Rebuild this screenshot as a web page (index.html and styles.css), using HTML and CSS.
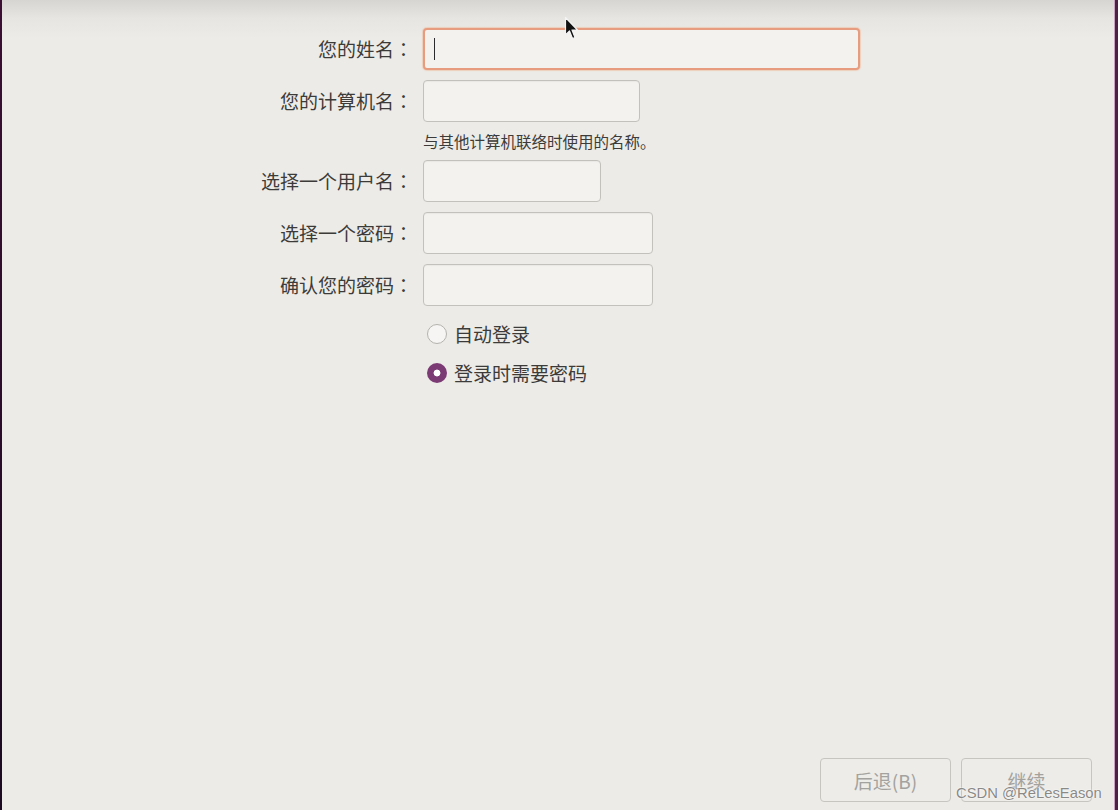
FILE: index.html
```html
<!DOCTYPE html>
<html lang="zh-CN">
<head>
<meta charset="utf-8">
<title>设置用户</title>
<link rel="stylesheet" href="styles.css">
</head>
<body>
<div class="screen">
  <div class="window">
    <div class="form">
      <label class="label">您的姓名<span class="colon" lang="zh-TW">：</span></label>
      <div class="field field-name focused"><span class="caret"></span></div>

      <label class="label">您的计算机名<span class="colon" lang="zh-TW">：</span></label>
      <div class="field field-host"></div>

      <div class="empty"></div>
      <div class="hint">与其他计算机联络时使用的名称。</div>

      <label class="label">选择一个用户名<span class="colon" lang="zh-TW">：</span></label>
      <div class="field field-user"></div>

      <label class="label">选择一个密码<span class="colon" lang="zh-TW">：</span></label>
      <div class="field field-pass"></div>

      <label class="label">确认您的密码<span class="colon" lang="zh-TW">：</span></label>
      <div class="field field-pass"></div>

      <div class="empty"></div>
      <div class="radios">
        <div class="radio-row"><span class="radio"></span><span class="radio-text">自动登录</span></div>
        <div class="radio-row"><span class="radio checked"></span><span class="radio-text">登录时需要密码</span></div>
      </div>
    </div>
    <div class="spacer"></div>
    <div class="actions">
      <button class="btn">后退(B)</button>
      <button class="btn">继续</button>
    </div>
  </div>
  <div class="edge"></div>
  <svg class="pointer" width="16" height="26" viewBox="0 0 16 26">
    <path d="M1.5 1.5 L1.5 19 L5.5 15 L8.5 22.5 L11 21.5 L8 14 L13.5 14 Z" fill="#111" stroke="#f4f4f4" stroke-width="1.2" stroke-linejoin="round"/>
  </svg>
  <div class="watermark">CSDN @ReLesEason</div>
</div>
</body>
</html>
```
FILE: styles.css
```css
html, body {
  margin: 0;
  padding: 0;
  background: #2a0c26;
}

.screen {
  position: relative;
  width: 1118px;
  height: 810px;
  display: flex;
  overflow: hidden;
  background: linear-gradient(#3a0f33, #1c0a22);
  font-family: "Noto Sans CJK SC", "Noto Sans", sans-serif;
}

.window {
  margin-left: 2px;
  width: 1112px;
  height: 810px;
  display: flex;
  flex-direction: column;
  background: linear-gradient(#d6d5d1 0px, #e6e5e1 18px, #ecebe7 38px, #ecebe7 100%);
  border-right: 1px solid #c7a3bf;
}

.edge {
  width: 3px;
  background: #4b2246;
}

.form {
  display: grid;
  grid-template-columns: 411px auto;
  column-gap: 10px;
  row-gap: 10px;
  align-items: center;
  justify-items: start;
  padding-top: 28px;
}

.label {
  justify-self: end;
  font-size: 19px;
  color: #3c3b39;
  line-height: 24px;
  white-space: nowrap;
}

.colon {
  font-family: "Noto Sans CJK TC", "Noto Sans CJK JP", sans-serif;
}

.field {
  box-sizing: border-box;
  height: 42px;
  background: #f3f2ef;
  border: 1px solid #c2c1bc;
  border-radius: 4px;
  box-shadow: inset 0 1px 1px rgba(0,0,0,0.04);
  position: relative;
}

.field-name { width: 437px; }
.field-host { width: 217px; }
.field-user { width: 178px; }
.field-pass { width: 230px; }

.focused {
  border: 2px solid #e79c7f;
  box-shadow: 0 0 1px 1px rgba(240, 190, 160, 0.6);
  background: #f4f2ef;
}

.caret {
  position: absolute;
  left: 9px;
  top: 8px;
  width: 1px;
  height: 22px;
  background: #2b2b2b;
}

.hint {
  font-size: 15.5px;
  line-height: 18px;
  color: #3c3b39;
  white-space: nowrap;
}

.radios {
  display: flex;
  flex-direction: column;
  gap: 19px;
  margin-top: 8px;
  padding-left: 4px;
}

.radio-row {
  display: flex;
  align-items: center;
  gap: 7px;
  height: 20px;
}

.radio {
  box-sizing: border-box;
  width: 20px;
  height: 20px;
  border-radius: 50%;
  border: 1px solid #b5b3ae;
  background: #f6f5f3;
}

.radio.checked {
  border: none;
  background: radial-gradient(circle, #ffffff 0 3px, #7c3a75 3.8px);
}

.radio-text {
  font-size: 19px;
  color: #3c3b39;
  line-height: 24px;
}

.spacer {
  flex: 1;
}

.actions {
  display: flex;
  justify-content: flex-end;
  gap: 10px;
  padding-right: 22px;
  padding-bottom: 8px;
}

.btn {
  box-sizing: border-box;
  width: 131px;
  height: 44px;
  border: 1px solid #c6c5c0;
  border-radius: 4px;
  background: #edece8;
  color: #a3a29e;
  font-family: "Noto Sans CJK SC", "Noto Sans", sans-serif;
  font-size: 19px;
  padding: 0;
}

.pointer {
  position: absolute;
  left: 564px;
  top: 16px;
}

.watermark {
  position: absolute;
  left: 956px;
  top: 785px;
  font-family: "Liberation Sans", Arial, sans-serif;
  font-size: 14.8px;
  color: #8a8986;
  text-shadow: 0 0 2px #ffffff, 0 0 1px #ffffff;
  white-space: nowrap;
}
```
